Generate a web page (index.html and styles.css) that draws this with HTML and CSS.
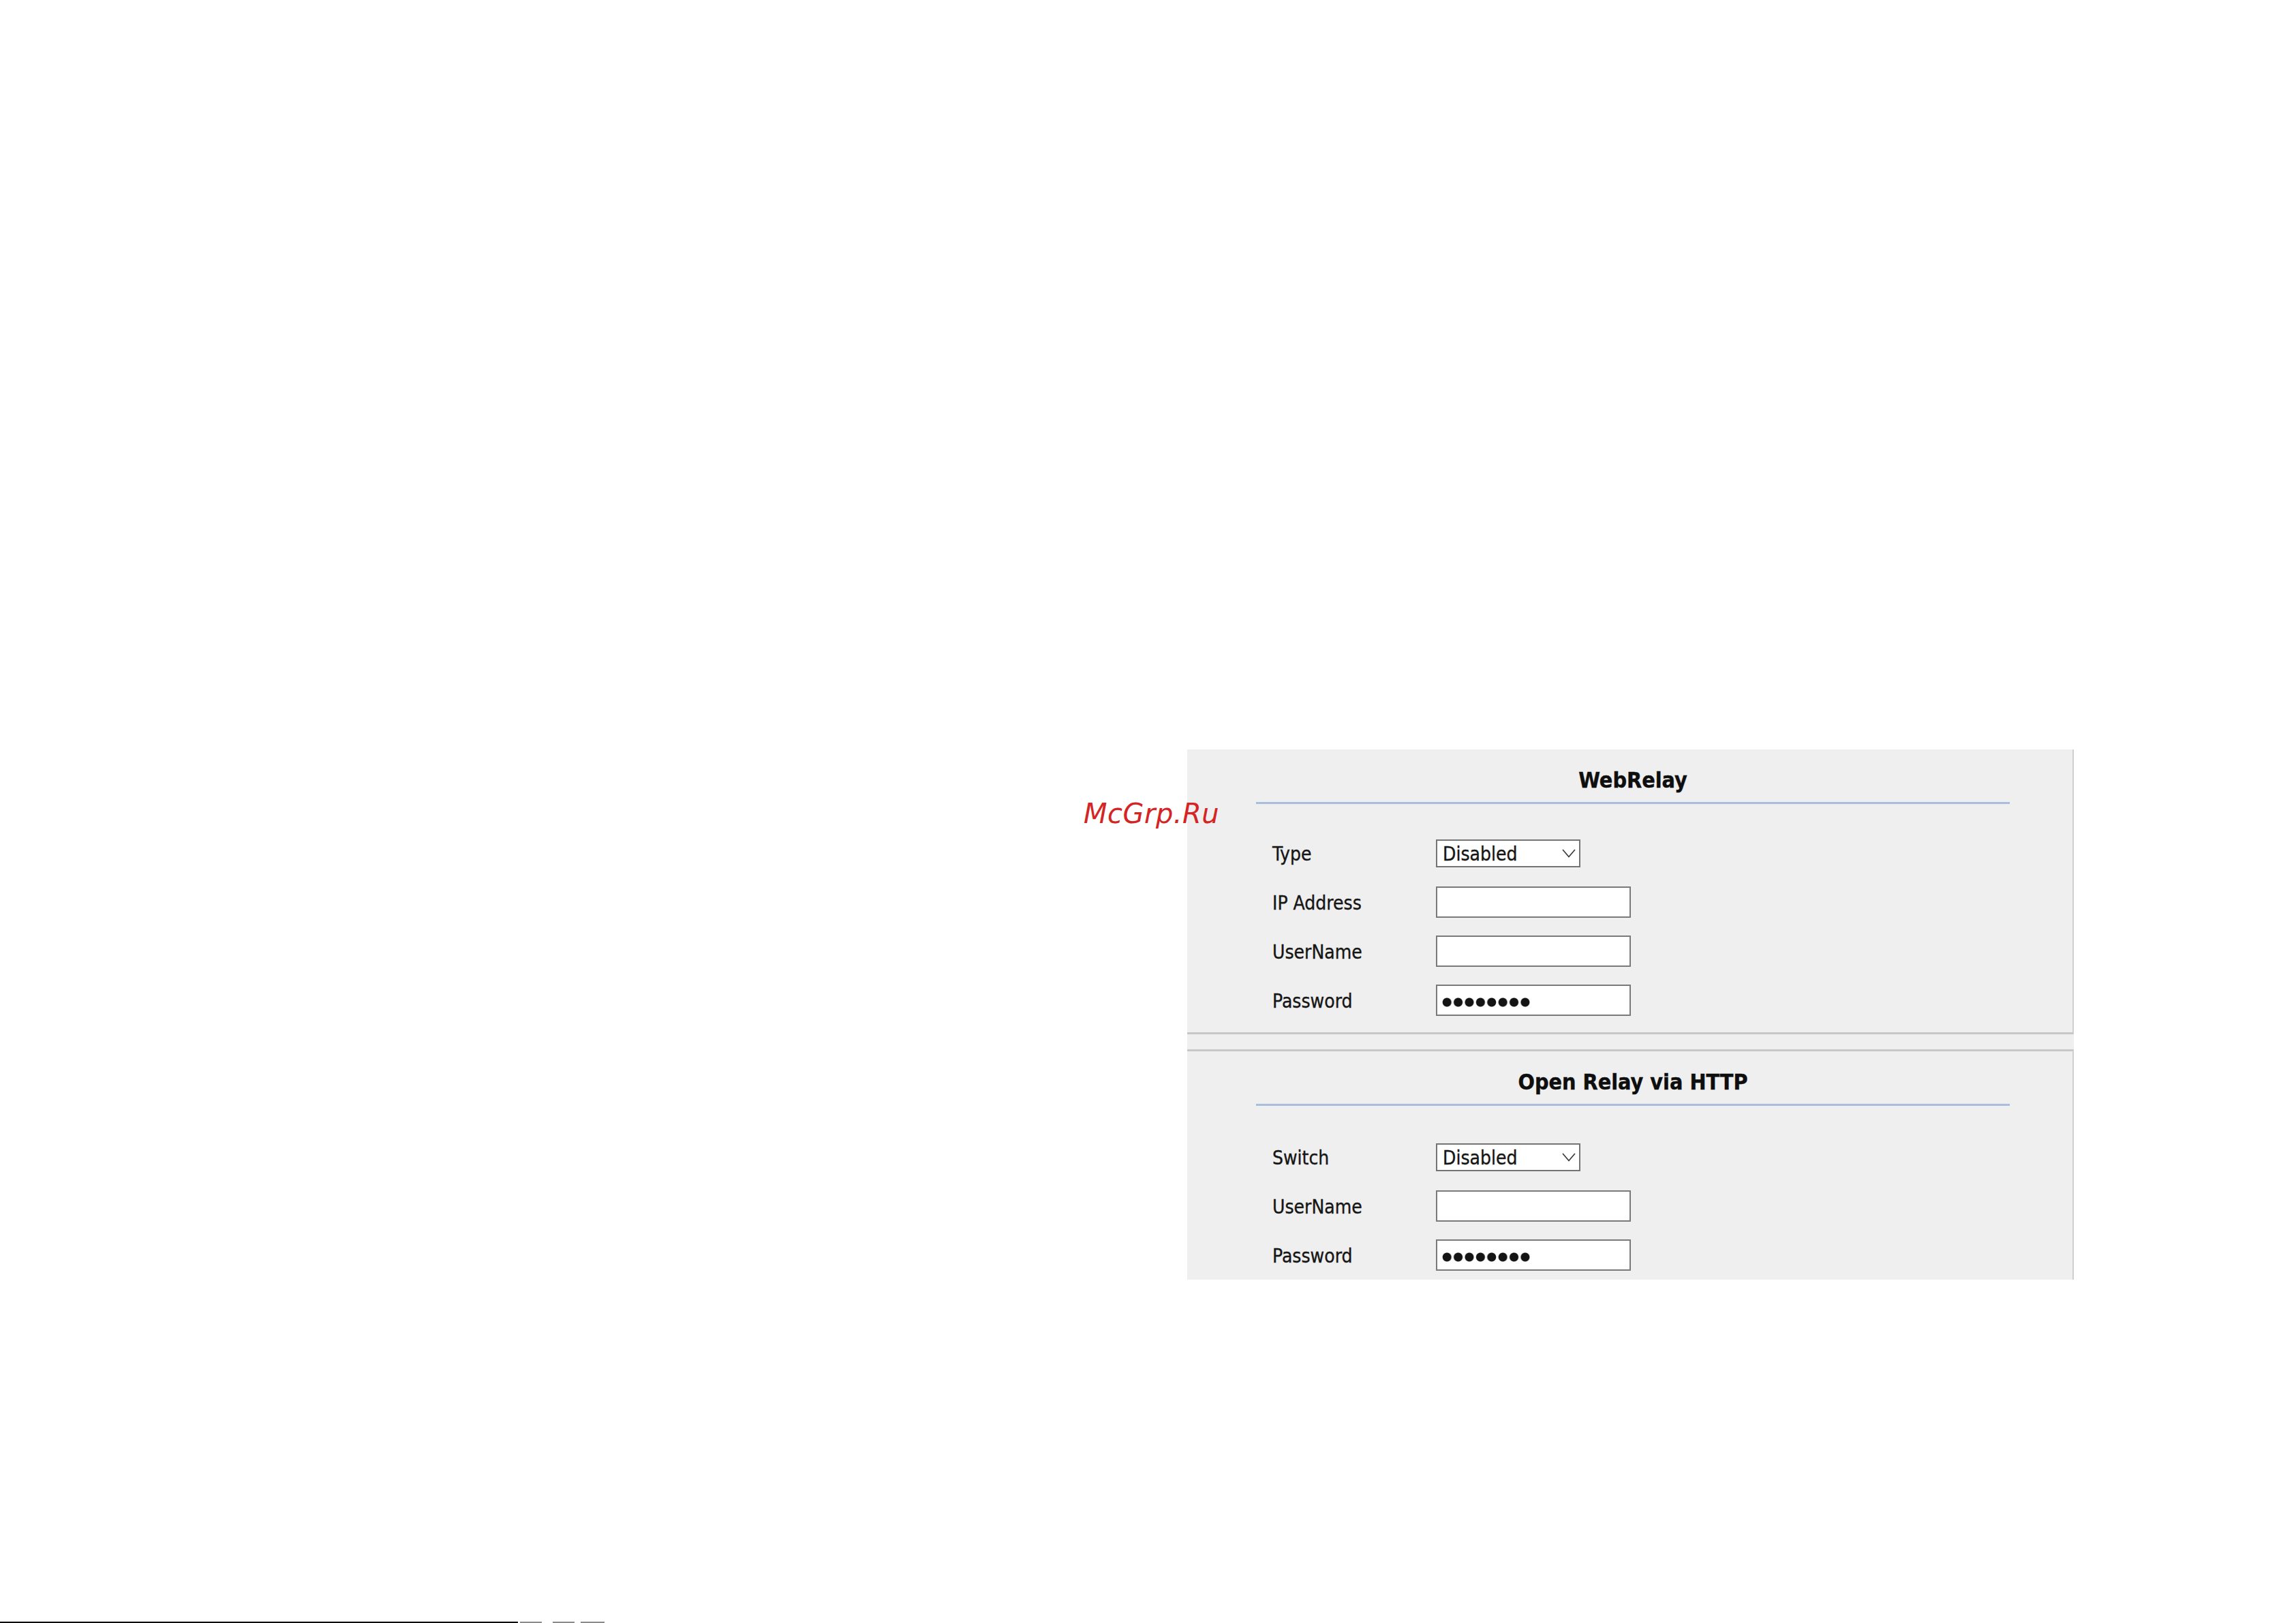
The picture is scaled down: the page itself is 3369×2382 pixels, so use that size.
FILE: index.html
```html
<!DOCTYPE html>
<html lang="en">
<head>
<meta charset="utf-8">
<title>WebRelay</title>
<link rel="stylesheet" href="styles.css">
</head>
<body>
<div class="page">
  <div class="watermark">McGrp.Ru</div>
  <div class="panel">
    <section class="section section-first">
      <div class="sec-head"><h2 class="sec-title">WebRelay</h2></div>
      <div class="form form-first">
        <div class="row">
          <span class="label">Type</span>
          <div class="select"><span class="select-text">Disabled</span>
            <svg class="chev" width="20" height="13" viewBox="0 0 20 13"><path d="M1 1 L10 11.5 L19 1" fill="none" stroke="#3a3a3a" stroke-width="1.7"/></svg>
          </div>
        </div>
        <div class="row">
          <span class="label">IP Address</span>
          <div class="input"></div>
        </div>
        <div class="row">
          <span class="label">UserName</span>
          <div class="input"></div>
        </div>
        <div class="row">
          <span class="label">Password</span>
          <div class="input"><span class="dots"></span></div>
        </div>
      </div>
    </section>
    <div class="sec-gap"></div>
    <section class="section section-second">
      <div class="sec-head"><h2 class="sec-title">Open Relay via HTTP</h2></div>
      <div class="form form-second">
        <div class="row">
          <span class="label">Switch</span>
          <div class="select"><span class="select-text">Disabled</span>
            <svg class="chev" width="20" height="13" viewBox="0 0 20 13"><path d="M1 1 L10 11.5 L19 1" fill="none" stroke="#3a3a3a" stroke-width="1.7"/></svg>
          </div>
        </div>
        <div class="row">
          <span class="label">UserName</span>
          <div class="input"></div>
        </div>
        <div class="row">
          <span class="label">Password</span>
          <div class="input"><span class="dots"></span></div>
        </div>
      </div>
    </section>
  </div>
  <div class="footer">
    <div class="footer-line"></div>
    <div class="footer-mark m1"></div>
    <div class="footer-mark m2"></div>
    <div class="footer-mark m3"></div>
  </div>
</div>
</body>
</html>
```

FILE: styles.css
```css
html, body {
  margin: 0;
  padding: 0;
  background: #ffffff;
}

.page {
  position: relative;
  width: 3369px;
  height: 2382px;
  box-sizing: border-box;
  padding-top: 1100px;
  display: flex;
  flex-direction: column;
  font-family: "DejaVu Sans Condensed", "DejaVu Sans", sans-serif;
  color: #1b1b1b;
  overflow: hidden;
}

.watermark {
  position: absolute;
  left: 1590px;
  top: 1174px;
  font-family: "DejaVu Sans", sans-serif;
  font-style: oblique;
  font-size: 40px;
  line-height: 40px;
  letter-spacing: 0.5px;
  color: #d42424;
  z-index: 2;
}

.panel {
  margin-left: 1742px;
  width: 1301px;
  background: #efefef;
}

.section {
  border-right: 2px solid #cfcfcf;
}

.section-first {
  border-bottom: 3px solid #c8c8c8;
}

.section-second {
  border-top: 3px solid #c8c8c8;
}

.sec-gap {
  height: 22px;
}

.sec-head {
  margin: 0 92px 0 101px;
  padding: 25px 0 12px;
  border-bottom: 3px solid #a9bddc;
}

.sec-title {
  margin: 0;
  text-align: center;
  font-family: "DejaVu Sans Condensed", "DejaVu Sans", sans-serif;
  font-weight: bold;
  font-size: 32px;
  line-height: 40px;
  color: #0e0e0e;
  -webkit-text-stroke: 0.4px #0e0e0e;
}

.form {
  padding-left: 125px;
}

.form-first {
  padding-top: 36px;
  padding-bottom: 11px;
}

.form-second {
  padding-top: 39px;
}

.row {
  display: grid;
  grid-template-columns: 240px auto;
  align-items: center;
  height: 72px;
}

.label {
  font-size: 28px;
  color: #161616;
  -webkit-text-stroke: 0.35px #161616;
  padding-top: 2px;
}

.select {
  box-sizing: border-box;
  width: 212px;
  height: 41px;
  background: #ffffff;
  border: 2px solid #747474;
  display: flex;
  align-items: center;
  justify-content: space-between;
  padding: 0 5px 0 8px;
}

.select-text {
  font-size: 28px;
  color: #161616;
  -webkit-text-stroke: 0.35px #161616;
  padding-top: 2px;
}

.chev {
  display: block;
}

.input {
  box-sizing: border-box;
  width: 286px;
  height: 46px;
  background: #ffffff;
  border: 2px solid #7a7a7a;
  display: flex;
  align-items: center;
  padding-left: 6px;
}

.dots {
  display: block;
  width: 132px;
  height: 14px;
  margin-top: 6px;
  background: radial-gradient(circle, #141414 6px, rgba(20,20,20,0) 7px) 0 0 / 16.4px 14px repeat-x;
}

.footer {
  margin-top: auto;
  display: flex;
  align-items: flex-end;
  height: 2px;
}

.footer-line {
  width: 760px;
  height: 2px;
  background: #000000;
}

.footer-mark {
  height: 2px;
  background: #8a8a8a;
}

.m1 {
  width: 32px;
  margin-left: 3px;
}

.m2 {
  width: 32px;
  margin-left: 16px;
}

.m3 {
  width: 35px;
  margin-left: 9px;
}
```
